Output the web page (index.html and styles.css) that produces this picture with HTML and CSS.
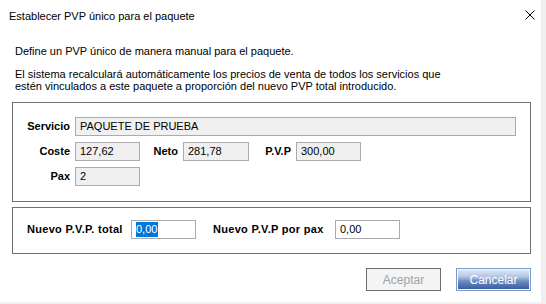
FILE: index.html
```html
<!DOCTYPE html>
<html lang="es">
<head>
    <meta charset="UTF-8">
    <meta name="viewport" content="width=device-width, initial-scale=1.0">
    <title>Establecer PVP único para el paquete</title>
    <link rel="stylesheet" href="styles.css">
</head>
<body>
    <div class="window">
        <div class="titlebar">
            <span class="title">Establecer PVP único para el paquete</span>
            <svg class="close" width="10" height="10" viewBox="0 0 10 10">
                <path d="M0.5 0.5 L9.5 9.5 M9.5 0.5 L0.5 9.5" stroke="#000" stroke-width="1" fill="none"/>
            </svg>
        </div>
        <div class="content">
            <p class="intro">Define un PVP único de manera manual para el paquete.</p>
            <p class="intro intro-detail">El sistema recalculará automáticamente los precios de venta de todos los servicios que<br>estén vinculados a este paquete a proporción del nuevo PVP total introducido.</p>

            <div class="group group-datos">
                <div class="row">
                    <span class="lbl">Servicio</span>
                    <div class="field readonly field-wide">PAQUETE DE PRUEBA</div>
                </div>
                <div class="row">
                    <span class="lbl">Coste</span>
                    <div class="field readonly">127,62</div>
                    <span class="lbl lbl-neto">Neto</span>
                    <div class="field readonly field-neto">281,78</div>
                    <span class="lbl lbl-pvp">P.V.P</span>
                    <div class="field readonly">300,00</div>
                </div>
                <div class="row">
                    <span class="lbl">Pax</span>
                    <div class="field readonly">2</div>
                </div>
            </div>

            <div class="group group-nuevo">
                <div class="row">
                    <span class="lbl-nuevo lbl-total">Nuevo P.V.P. total</span>
                    <div class="field"><span class="selected">0,00</span></div>
                    <span class="lbl-nuevo lbl-pax">Nuevo P.V.P por pax</span>
                    <div class="field">0,00</div>
                </div>
            </div>

            <div class="actions">
                <button class="btn btn-disabled">Aceptar</button>
                <button class="btn btn-primary">Cancelar</button>
            </div>
        </div>
    </div>
</body>
</html>
```

FILE: styles.css
```css
body {
    margin: 0;
    background-color: #f0f0f0;
    font-family: "Liberation Sans", Arial, sans-serif;
    font-size: 11px;
    color: #000;
}
.window {
    width: 541px;
    height: 302px;
    background-color: #fff;
}
.titlebar {
    height: 45px;
    box-sizing: border-box;
    padding: 8px 6px 0 9px;
    display: flex;
    justify-content: space-between;
    align-items: flex-start;
}
.title {
    font-size: 11px;
    line-height: 16px;
}
.close {
    margin-top: 2px;
}
.content {
    padding: 0 10px 0 12px;
}
.intro {
    margin: 0 0 11px 3px;
    line-height: 12px;
}
.intro-detail {
    margin-bottom: 10px;
}
.group {
    width: 519px;
    box-sizing: border-box;
    border: 1px solid #707070;
}
.group-datos {
    padding: 14px 0 15px 13px;
}
.group-nuevo {
    margin-top: 5px;
    padding: 12px 0 14px 14px;
}
.row {
    display: flex;
    align-items: center;
    height: 19px;
}
.group-datos .row + .row {
    margin-top: 6px;
}
.lbl {
    width: 44px;
    margin-right: 5px;
    text-align: right;
    font-weight: bold;
    line-height: 19px;
}
.lbl-neto {
    width: 38px;
}
.lbl-pvp {
    width: 42px;
}
.field {
    width: 65px;
    height: 19px;
    box-sizing: border-box;
    border: 1px solid #ababab;
    padding: 0 4px;
    line-height: 17px;
    background-color: #fff;
    white-space: nowrap;
}
.field.readonly {
    background-color: #f0f0f0;
}
.field-wide {
    width: 441px;
}
.field-neto {
    width: 66px;
}
.lbl-nuevo {
    font-weight: bold;
    line-height: 19px;
    letter-spacing: 0.3px;
}
.lbl-total {
    width: 104px;
}
.lbl-pax {
    width: 122px;
    margin-left: 17px;
}
.selected {
    background-color: #0078d7;
    color: #fff;
    display: inline-block;
    line-height: 15px;
    padding-right: 1px;
}
.actions {
    display: flex;
    justify-content: flex-end;
    gap: 15px;
    margin-top: 14px;
}
.btn {
    width: 75px;
    height: 23px;
    box-sizing: border-box;
    font-family: "Liberation Sans", Arial, sans-serif;
    font-size: 12px;
    padding: 0;
}
.btn-disabled {
    background-color: #f4f4f4;
    border: 1px solid #6d6d6d;
    color: #a3a3a3;
}
.btn-primary {
    border: 1px solid #7d9ac7;
    box-shadow: inset 0 0 0 1px #f2f5fb;
    background: linear-gradient(#e3eaf6 0%, #b6c7e4 35%, #6a89c0 60%, #34589b 100%);
    color: #fff;
}
```
